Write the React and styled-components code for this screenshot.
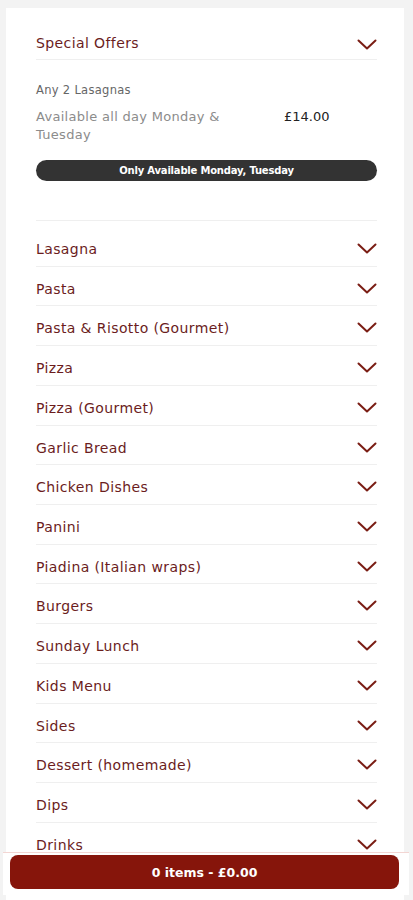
import React from "react";
import styled, { createGlobalStyle } from "styled-components";

const Global = createGlobalStyle`
  html, body { margin: 0; padding: 0; background: #f3f3f3; }
  body { font-family: "DejaVu Sans", "Noto Sans", sans-serif; }
  * { box-sizing: border-box; }
`;

const Card = styled.div`
  margin: 8px 0 0 6px;
  width: 398px;
  background: #fff;
  padding: 0 27px 80px 30px;
`;

const Header = styled.div`
  display: flex;
  align-items: center;
  justify-content: space-between;
  padding-top: 25px;
  padding-bottom: 7px;
  height: 52px;
  border-bottom: 1px solid #efefef;
`;

const Title = styled.span`
  font-size: 14px;
  line-height: 20px;
  color: #6b1d1d;
  letter-spacing: 0.4px;
`;

const Offer = styled.div`
  padding-top: 21px;
  padding-bottom: 39px;
  border-bottom: 1px solid #efefef;
`;

const OfferName = styled.div`
  font-size: 11.5px;
  line-height: 18px;
  color: #666;
  letter-spacing: 0.3px;
`;

const OfferRow = styled.div`
  display: flex;
  align-items: flex-start;
  margin-top: 9px;
`;

const OfferDesc = styled.div`
  width: 205px;
  font-size: 13px;
  line-height: 18px;
  color: #8c8c8c;
  letter-spacing: 0.3px;
`;

const Price = styled.div`
  margin-left: 43px;
  font-size: 13px;
  line-height: 18px;
  color: #222;
`;

const Badge = styled.div`
  margin-top: 16px;
  height: 21px;
  border-radius: 11px;
  background: #333;
  color: #fff;
  font-size: 10px;
  font-weight: 700;
  letter-spacing: -0.2px;
  display: flex;
  align-items: center;
  justify-content: center;
`;

const List = styled.div`
  margin-top: 6px;
`;

const Row = styled.div`
  display: flex;
  justify-content: space-between;
  align-items: flex-start;
  height: 39.73px;
  padding-top: 12px;
  border-bottom: 1px solid #efefef;
`;

const ChevronWrap = styled.span`
  display: flex;
  margin-top: ${(p) => p.$mt || 4}px;
`;

const Chevron = ({ mt }) => (
  <ChevronWrap $mt={mt}>
    <svg width="20" height="11" viewBox="0 0 20 11">
      <polyline
        points="1.5,1.5 10,9.5 18.5,1.5"
        fill="none"
        stroke="#7a1d14"
        strokeWidth="2"
        strokeLinecap="round"
        strokeLinejoin="round"
      />
    </svg>
  </ChevronWrap>
);

const Bar = styled.div`
  position: fixed;
  left: 3px;
  right: 4px;
  bottom: 5px;
  height: 43px;
  background: #fff;
  border-top: 1px solid #f3d6d3;
  padding: 2px 10px 0 7px;
`;

const CartButton = styled.button`
  width: 100%;
  height: 34px;
  border: none;
  border-radius: 8px;
  background: #86150b;
  color: #fff;
  font-family: inherit;
  font-size: 12.5px;
  font-weight: 700;
  cursor: pointer;
`;

const categories = [
  "Lasagna",
  "Pasta",
  "Pasta & Risotto (Gourmet)",
  "Pizza",
  "Pizza (Gourmet)",
  "Garlic Bread",
  "Chicken Dishes",
  "Panini",
  "Piadina (Italian wraps)",
  "Burgers",
  "Sunday Lunch",
  "Kids Menu",
  "Sides",
  "Dessert (homemade)",
  "Dips",
  "Drinks",
];

export default function App() {
  return (
    <>
      <Global />
      <Card>
        <Header>
          <Title>Special Offers</Title>
          <Chevron mt={0} />
        </Header>
        <Offer>
          <OfferName>Any 2 Lasagnas</OfferName>
          <OfferRow>
            <OfferDesc>Available all day Monday &amp; Tuesday</OfferDesc>
            <Price>£14.00</Price>
          </OfferRow>
          <Badge>Only Available Monday, Tuesday</Badge>
        </Offer>
        <List>
          {categories.map((c) => (
            <Row key={c}>
              <Title>{c}</Title>
              <Chevron />
            </Row>
          ))}
        </List>
      </Card>
      <Bar>
        <CartButton>0 items - £0.00</CartButton>
      </Bar>
    </>
  );
}
